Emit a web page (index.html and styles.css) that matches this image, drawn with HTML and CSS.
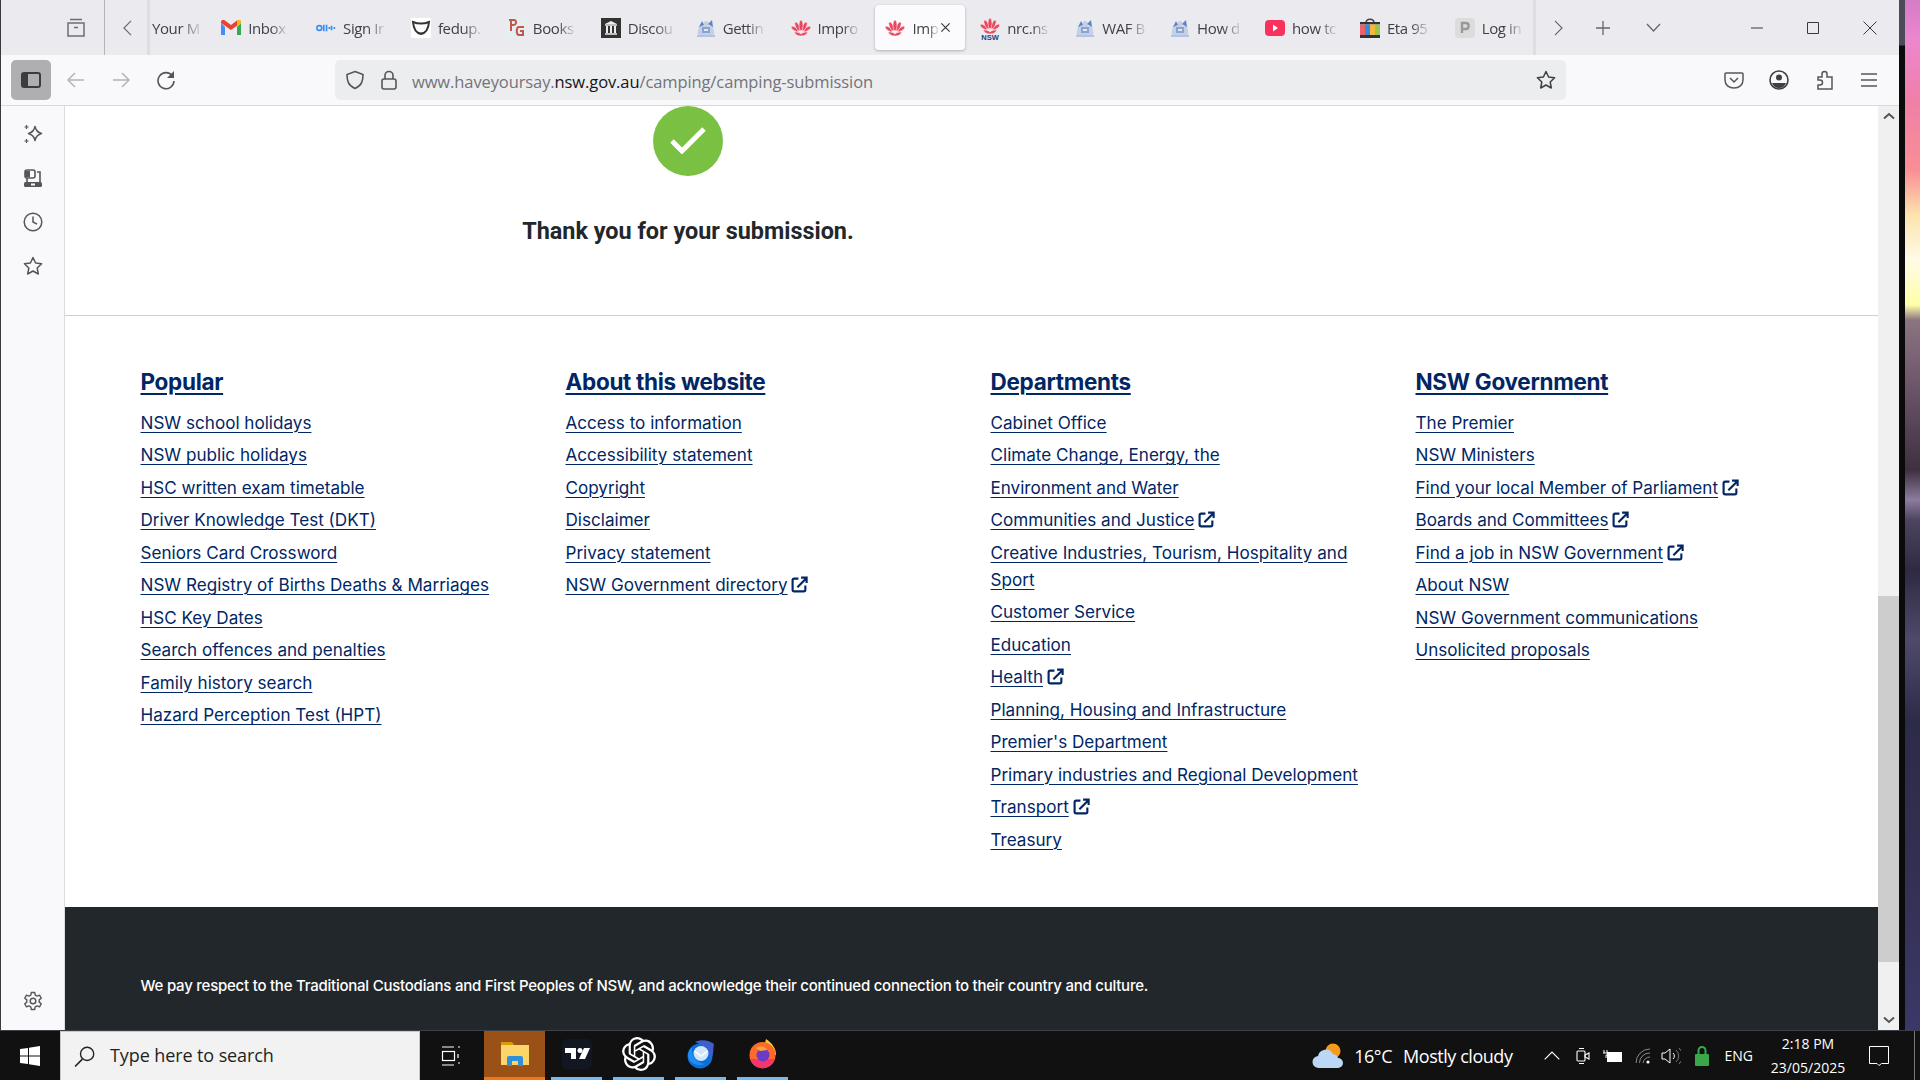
FILE: index.html
```html
<!DOCTYPE html>
<html lang="en">
<head>
<meta charset="utf-8">
<title>Thank you for your submission</title>
<link rel="stylesheet" href="styles.css">
</head>
<body>
<svg class="sprite" aria-hidden="true">
  <symbol id="gmail" viewBox="0 0 20 16"><path d="M0 3v12h4V7z" fill="#4a8af4"/><path d="M16 7v8h4V3z" fill="#34a853"/><path d="M0 3l10 7 10-7V2c0-2-2.500-2.500-4-1.500L10 5 4 .5C2.500-.5 0 0 0 2z" fill="#ea4335"/><path d="M16 .5V7l4-4V2c0-2-2.500-2.500-4-1.500z" fill="#fbbc04"/></symbol>
  <symbol id="okta" viewBox="0 0 18 8"><circle cx="3" cy="4" r="2.200" fill="none" stroke="#3a8df5" stroke-width="1.500"/><path d="M7 1v6M9.500 1v6M12 3v2M14 2v4M16.500 3v2" stroke="#3a8df5" stroke-width="1.500"/></symbol>
  <symbol id="fedup" viewBox="0 0 20 20"><rect width="20" height="20" fill="#fff"/><path d="M2 4c5 2 11 2 16 0-.5 6-2 11-8 12C4 15 2.500 10 2 4z" fill="none" stroke="#333" stroke-width="2"/><path d="M6 13c3 2 5 2 8 0l-1 3H7z" fill="#333"/></symbol>
  <symbol id="pg" viewBox="0 0 20 20"><rect width="20" height="20" fill="#e6eef0"/><path d="M3 2h5c3 0 3 5-1 5H5M5 2v11" fill="none" stroke="#c2574c" stroke-width="2"/><path d="M18 9h-5c-3 0-3 8 0 8h4v-4h-3" fill="none" stroke="#c2574c" stroke-width="2"/></symbol>
  <symbol id="disc" viewBox="0 0 20 20"><rect width="20" height="20" fill="#333"/><path d="M4 6l6-3 6 3z" fill="#eee"/><path d="M4 7h12M4 16h12" stroke="#eee" stroke-width="1.500"/><path d="M6 8v7M10 8v7M14 8v7" stroke="#eee" stroke-width="2"/></symbol>
  <symbol id="arms" viewBox="0 0 20 20"><path d="M10 3C8 3 7 5 7 8H3C3 10 1 14 2 17l3 1h10l3-1c1-3-1-7-1-9h-4c0-3-1-5-3-5z" fill="#c3d0e6"/><path d="M3 9l3-6 2 4zM12 6l4-4 1 7z" fill="#5d84c4"/><path d="M6 9h8v6H6z" fill="#8aa4d2"/><path d="M8 11h4v2H8z" fill="#dfe7f4"/><path d="M1 17h18v2H1z" fill="#b2c4e2"/></symbol>
  <symbol id="waratah" viewBox="0 0 20 20"><g fill="#e8475f" stroke="#fff" stroke-width=".5"><ellipse cx="3.800" cy="11" rx="1.700" ry="4.200" transform="rotate(-55 3.800 11)"/><ellipse cx="16.200" cy="11" rx="1.700" ry="4.200" transform="rotate(55 16.200 11)"/><ellipse cx="6.500" cy="8.500" rx="1.900" ry="4.800" transform="rotate(-24 6.500 8.500)"/><ellipse cx="13.500" cy="8.500" rx="1.900" ry="4.800" transform="rotate(24 13.500 8.500)"/><ellipse cx="10" cy="7.500" rx="2" ry="5.200"/><path d="M3 14c2 0 5 0 7 2 2-2 5-2 7-2-1 2-3 4-7 4s-6-2-7-4z"/></g></symbol>
  <symbol id="nsw" viewBox="0 0 20 24"><use href="#waratah" width="20" height="20"/><text x="10" y="23.500" font-size="7.500" font-weight="700" fill="#1d3f7a" text-anchor="middle" font-family="Liberation Sans, sans-serif">NSW</text></symbol>
  <symbol id="yt" viewBox="0 0 20 16"><rect width="20" height="16" rx="4" fill="#f9315c"/><path d="M8 4.500l5 3.500-5 3.500z" fill="#fff"/></symbol>
  <symbol id="eta" viewBox="0 0 20 20"><path d="M6 5c0-5 8-5 8 0" fill="none" stroke="#444" stroke-width="1.500"/><rect y="4" width="20" height="2.500" fill="#333"/><rect y="17" width="20" height="3" fill="#333"/><rect y="6.500" width="5" height="10.500" fill="#e8636b"/><rect x="5" y="6.500" width="5" height="10.500" fill="#3c88d8"/><rect x="10" y="6.500" width="5" height="10.500" fill="#f3b93c"/><rect x="15" y="6.500" width="5" height="10.500" fill="#9cc649"/></symbol>
  <symbol id="pbox" viewBox="0 0 20 20"><rect width="20" height="20" rx="4" fill="#dcdcdc"/><path d="M7 15V5h4c3.500 0 3.500 6 0 6H7" fill="none" stroke="#999" stroke-width="2.400"/></symbol>
  <symbol id="ext" viewBox="0 0 16 16"><path d="M7 2.500H3A1.500 1.500 0 0 0 1.500 4v9A1.500 1.500 0 0 0 3 14.500h9a1.500 1.500 0 0 0 1.500-1.500V9" fill="none" stroke="#002664" stroke-width="2"/><path d="M6 10.500L14 2.500M9.500 1.500h5.200v5.200" fill="none" stroke="#002664" stroke-width="2"/></symbol>
</svg>

<div class="desk">
  <div class="upper">
    <div class="window">
      <header class="tabbar">
        <svg class="ti tgroup" viewBox="0 0 20 20"><path d="M4 1.500h12M2 5h16v13H2zM8 9.500h4" fill="none" stroke="#6d6d73" stroke-width="1.500"/></svg>
        <div class="vsep"></div>
        <svg class="ti chev-left" viewBox="0 0 10 18"><path d="M9 1L1 9l8 8" fill="none" stroke="#66666c" stroke-width="1.300"/></svg>
        <div class="tabs">
          <div class="tab tab-first"><span class="tab-label">Your M</span></div>
          <div class="tab"><svg class="fav"><use href="#gmail"/></svg><span class="tab-label">Inbox</span></div>
          <div class="tab"><svg class="fav"><use href="#okta"/></svg><span class="tab-label">Sign Ir</span></div>
          <div class="tab"><svg class="fav"><use href="#fedup"/></svg><span class="tab-label">fedup.</span></div>
          <div class="tab"><svg class="fav"><use href="#pg"/></svg><span class="tab-label">Books</span></div>
          <div class="tab"><svg class="fav"><use href="#disc"/></svg><span class="tab-label">Discou</span></div>
          <div class="tab"><svg class="fav"><use href="#arms"/></svg><span class="tab-label">Gettin</span></div>
          <div class="tab"><svg class="fav"><use href="#waratah"/></svg><span class="tab-label">Impro</span></div>
          <div class="tab tab-active"><svg class="fav"><use href="#waratah"/></svg><span class="tab-label">Imp</span><svg class="tab-close" viewBox="0 0 12 12"><path d="M1.500 1.500l9 9M10.500 1.500l-9 9" stroke="#3a3a40" stroke-width="1.300"/></svg></div>
          <div class="tab"><svg class="fav fav-tall"><use href="#nsw"/></svg><span class="tab-label">nrc.ns</span></div>
          <div class="tab"><svg class="fav"><use href="#arms"/></svg><span class="tab-label">WAF B</span></div>
          <div class="tab"><svg class="fav"><use href="#arms"/></svg><span class="tab-label">How d</span></div>
          <div class="tab"><svg class="fav"><use href="#yt"/></svg><span class="tab-label">how tc</span></div>
          <div class="tab"><svg class="fav"><use href="#eta"/></svg><span class="tab-label">Eta 95</span></div>
          <div class="tab"><svg class="fav"><use href="#pbox"/></svg><span class="tab-label">Log in</span></div>
        </div>
        <svg class="ti chev-right" viewBox="0 0 10 18"><path d="M1 1l8 8-8 8" fill="none" stroke="#66666c" stroke-width="1.300"/></svg>
        <svg class="ti plus" viewBox="0 0 14 14"><path d="M7 0v14M0 7h14" stroke="#66666c" stroke-width="1.300"/></svg>
        <svg class="ti down" viewBox="0 0 15 9"><path d="M1 1l6.500 7L14 1" fill="none" stroke="#66666c" stroke-width="1.300"/></svg>
        <svg class="ti win-min" viewBox="0 0 12 12"><path d="M0 6h12" stroke="#3a3a40"/></svg>
        <svg class="ti win-max" viewBox="0 0 12 12"><path d="M.5.5h11v11H.5z" fill="none" stroke="#3a3a40"/></svg>
        <svg class="ti win-close" viewBox="0 0 14 14"><path d="M.5.500l13 13M13.500.500l-13 13" stroke="#3a3a40"/></svg>
      </header>

      <nav class="toolbar">
        <div class="side-btn"><svg class="ic20" viewBox="0 0 20 20"><rect x="1" y="3" width="18" height="14" rx="2" fill="none" stroke="#3b3b44" stroke-width="2"/><rect x="1" y="3" width="6" height="14" fill="#3b3b44"/></svg></div>
        <svg class="ic20 back" viewBox="0 0 20 20"><path d="M18 10H2M9 3l-7 7 7 7" fill="none" stroke="#b4b4b8" stroke-width="1.500"/></svg>
        <svg class="ic20 fwd" viewBox="0 0 20 20"><path d="M2 10h16M11 3l7 7-7 7" fill="none" stroke="#b4b4b8" stroke-width="1.500"/></svg>
        <svg class="ic20 reload" viewBox="0 0 20 20"><path d="M16.500 6A8 8 0 1 0 18 11" fill="none" stroke="#55555c" stroke-width="1.600"/><path d="M18 1v7h-7z" fill="#55555c"/></svg>
        <div class="urlbar">
          <svg class="ic20 shield" viewBox="0 0 20 20"><path d="M10 1.500l8 3c0 6-1 11-8 14-7-3-8-8-8-14z" fill="none" stroke="#55555c" stroke-width="1.600"/></svg>
          <svg class="ic20 lock" viewBox="0 0 20 20"><rect x="3" y="9" width="14" height="10" rx="2" fill="none" stroke="#55555c" stroke-width="1.600"/><path d="M6 9V5.500a4 4 0 0 1 8 0V9" fill="none" stroke="#55555c" stroke-width="1.600"/></svg>
          <span class="url"><span class="url-dim">www.haveyoursay.</span>nsw.gov.au<span class="url-dim">/camping/camping-submission</span></span>
          <svg class="ic20 ustar" viewBox="0 0 20 20"><path d="M10 1.500l2.600 5.500 6 .8-4.400 4.200 1.100 6L10 15l-5.300 3 1.100-6L1.400 7.800l6-.8z" fill="none" stroke="#3f3f46" stroke-width="1.500" stroke-linejoin="round"/></svg>
        </div>
        <svg class="ic20 pocket" viewBox="0 0 20 20"><path d="M2 3h16a1 1 0 0 1 1 1v6c0 5-4 8-9 8s-9-3-9-8V4a1 1 0 0 1 1-1z" fill="none" stroke="#55555c" stroke-width="1.500"/><path d="M6 8l4 4 4-4" fill="none" stroke="#55555c" stroke-width="1.500"/></svg>
        <svg class="ic20 profile" viewBox="0 0 20 20"><circle cx="10" cy="10" r="9" fill="none" stroke="#3f3f46" stroke-width="1.600"/><circle cx="10" cy="7.500" r="3" fill="#3f3f46"/><path d="M3 13h14c-1 3-4 5-7 5s-6-2-7-5z" fill="#3f3f46"/></svg>
        <svg class="ic20 puzzle" viewBox="0 0 20 20"><path d="M3 7h4V4a2.500 2.500 0 0 1 5 0v3h5v12H3v-4h2a2.500 2.500 0 0 0 0-5H3z" fill="none" stroke="#55555c" stroke-width="1.500"/></svg>
        <svg class="ic20 menu" viewBox="0 0 20 20"><path d="M2 4h16M2 10h16M2 16h16" stroke="#55555c" stroke-width="1.500"/></svg>
      </nav>

      <div class="body">
        <aside class="sidebar">
          <svg class="ic20" viewBox="0 0 20 20"><path d="M12 2.500c.8 4 2.500 5.800 6.500 7-4 1.200-5.700 3-6.500 7-.8-4-2.500-5.800-6.500-7 4-1.200 5.700-3 6.500-7z" fill="none" stroke="#55555c" stroke-width="1.500" stroke-linejoin="round"/><path d="M3.500 1v4M1.500 3h4M3.500 15v4M1.500 17h4" stroke="#55555c" stroke-width="1.200"/></svg>
          <svg class="ic20" viewBox="0 0 20 20"><rect x="2" y="2" width="10" height="8" rx="2" fill="none" stroke="#55555c" stroke-width="1.600"/><rect x="2" y="3" width="5" height="6" fill="#55555c"/><path d="M14 4h3v10M4 10v4" fill="none" stroke="#55555c" stroke-width="1.600"/><rect x="1" y="14" width="18" height="5" rx="1.500" fill="#55555c"/><rect x="8" y="15.500" width="4" height="2" fill="#f9f9fb"/></svg>
          <svg class="ic20" viewBox="0 0 20 20"><circle cx="10" cy="10" r="8.800" fill="none" stroke="#55555c" stroke-width="1.500"/><path d="M10 4.500V10l4 2.200" fill="none" stroke="#55555c" stroke-width="1.500"/></svg>
          <svg class="ic20" viewBox="0 0 20 20"><path d="M10 1.500l2.600 5.500 6 .8-4.400 4.200 1.100 6L10 15l-5.300 3 1.100-6L1.400 7.800l6-.8z" fill="none" stroke="#55555c" stroke-width="1.500" stroke-linejoin="round"/></svg>
          <svg class="ic20 gear" viewBox="0 0 20 20"><circle cx="10" cy="10" r="2.800" fill="none" stroke="#55555c" stroke-width="1.500"/><path d="M8.300 1.500h3.400l.5 2.600 1.900 1 2.400-.9 1.700 3-2 1.700v2.200l2 1.700-1.700 3-2.400-.9-1.900 1-.5 2.600H8.300l-.5-2.600-1.900-1-2.400.9-1.700-3 2-1.700V8.900l-2-1.700 1.700-3 2.400.9 1.900-1z" fill="none" stroke="#55555c" stroke-width="1.400" stroke-linejoin="round"/></svg>
        </aside>

        <main class="content">
          <section class="thanks">
            <div class="thanks-inner">
              <div class="check"><svg class="check-mark" viewBox="0 0 36 28"><path d="M2 15l10 10L34 3" fill="none" stroke="#fff" stroke-width="5"/></svg></div>
              <h1 class="thanks-title">Thank you for your submission.</h1>
            </div>
          </section>

          <section class="links">
            <div class="link-col">
              <h2 class="col-title"><a href="#">Popular</a></h2>
              <ul class="link-list">
                <li><a href="#">NSW school holidays</a></li>
                <li><a href="#">NSW public holidays</a></li>
                <li><a href="#">HSC written exam timetable</a></li>
                <li><a href="#">Driver Knowledge Test (DKT)</a></li>
                <li><a href="#">Seniors Card Crossword</a></li>
                <li><a href="#">NSW Registry of Births Deaths &amp; Marriages</a></li>
                <li><a href="#">HSC Key Dates</a></li>
                <li><a href="#">Search offences and penalties</a></li>
                <li><a href="#">Family history search</a></li>
                <li><a href="#">Hazard Perception Test (HPT)</a></li>
              </ul>
            </div>
            <div class="link-col">
              <h2 class="col-title"><a href="#">About this website</a></h2>
              <ul class="link-list">
                <li><a href="#">Access to information</a></li>
                <li><a href="#">Accessibility statement</a></li>
                <li><a href="#">Copyright</a></li>
                <li><a href="#">Disclaimer</a></li>
                <li><a href="#">Privacy statement</a></li>
                <li><a href="#">NSW Government directory</a> <svg class="ext"><use href="#ext"/></svg></li>
              </ul>
            </div>
            <div class="link-col">
              <h2 class="col-title"><a href="#">Departments</a></h2>
              <ul class="link-list">
                <li><a href="#">Cabinet Office</a></li>
                <li><a href="#">Climate Change, Energy, the</a></li>
                <li><a href="#">Environment and Water</a></li>
                <li><a href="#">Communities and Justice</a> <svg class="ext"><use href="#ext"/></svg></li>
                <li><a href="#">Creative Industries, Tourism, Hospitality and Sport</a></li>
                <li><a href="#">Customer Service</a></li>
                <li><a href="#">Education</a></li>
                <li><a href="#">Health</a> <svg class="ext"><use href="#ext"/></svg></li>
                <li><a href="#">Planning, Housing and Infrastructure</a></li>
                <li><a href="#">Premier's Department</a></li>
                <li><a href="#">Primary industries and Regional Development</a></li>
                <li><a href="#">Transport</a> <svg class="ext"><use href="#ext"/></svg></li>
                <li><a href="#">Treasury</a></li>
              </ul>
            </div>
            <div class="link-col">
              <h2 class="col-title"><a href="#">NSW Government</a></h2>
              <ul class="link-list">
                <li><a href="#">The Premier</a></li>
                <li><a href="#">NSW Ministers</a></li>
                <li><a href="#">Find your local Member of Parliament</a> <svg class="ext"><use href="#ext"/></svg></li>
                <li><a href="#">Boards and Committees</a> <svg class="ext"><use href="#ext"/></svg></li>
                <li><a href="#">Find a job in NSW Government</a> <svg class="ext"><use href="#ext"/></svg></li>
                <li><a href="#">About NSW</a></li>
                <li><a href="#">NSW Government communications</a></li>
                <li><a href="#">Unsolicited proposals</a></li>
              </ul>
            </div>
          </section>

          <footer class="site-footer">
            <p class="ack">We pay respect to the Traditional Custodians and First Peoples of NSW, and acknowledge their continued connection to their country and culture.</p>
          </footer>
        </main>

        <div class="scrollbar">
          <svg class="sb-arrow" viewBox="0 0 12 8"><path d="M1 6.500l5-4.500 5 4.500" fill="none" stroke="#555" stroke-width="2"/></svg>
          <div class="sb-track"><div class="sb-thumb"></div></div>
          <svg class="sb-arrow" viewBox="0 0 12 8"><path d="M1 1.500L6 6l5-4.500" fill="none" stroke="#555" stroke-width="2"/></svg>
        </div>
      </div>
    </div>
    <div class="edge"></div>
    <div class="wallpaper"></div>
  </div>

  <footer class="taskbar">
    <svg class="start" viewBox="0 0 20 20"><path d="M0 3l8-1.100V9.500H0zM9 1.700L20 0v9.500H9zM0 10.500h8v7.600L0 17zM9 10.500h11V20L9 18.300z" fill="#fff"/></svg>
    <div class="search">
      <svg class="search-ic" viewBox="0 0 20 20"><circle cx="12.500" cy="7.500" r="6.300" fill="none" stroke="#222" stroke-width="1.300"/><path d="M8 12.500L1 19.500" stroke="#222" stroke-width="1.500"/></svg>
      <span class="search-text">Type here to search</span>
    </div>
    <svg class="taskview" viewBox="0 0 20 20"><path d="M1 1h12M1 19h12M17 1h2M17 8v4M17 17h2" stroke="#fff" stroke-width="1.200" fill="none"/><rect x="1.500" y="5.500" width="12" height="9" fill="none" stroke="#fff" stroke-width="1.200"/></svg>
    <div class="task task-active">
      <svg class="task-ic" viewBox="0 0 30 30"><path d="M1 3h11l3 4H1z" fill="#d99a0b"/><path d="M1 6h28v20H1z" fill="#fbd568"/><path d="M7 27v-8a2 2 0 0 1 2-2h12a2 2 0 0 1 2 2v8h-5v-5h-6v5z" fill="#2f8fd8"/></svg>
    </div>
    <div class="task task-tv">
      <svg class="task-ic" viewBox="0 0 30 30"><rect width="30" height="30" rx="5" fill="#131722"/><path d="M3 9h11v11H9v-6H3z" fill="#fff"/><circle cx="18" cy="11.500" r="2.500" fill="#fff"/><path d="M22 9h6l-5 11h-6z" fill="#fff"/></svg>
    </div>
    <div class="task task-open">
      <svg class="task-ic task-knot" viewBox="0 0 24 24"><path d="M22.282 9.821a5.985 5.985 0 0 0-.516-4.911 6.046 6.046 0 0 0-6.510-2.900A6.065 6.065 0 0 0 4.981 4.182a5.985 5.985 0 0 0-3.998 2.900 6.046 6.046 0 0 0 .743 7.097 5.980 5.980 0 0 0 .511 4.911 6.051 6.051 0 0 0 6.515 2.900A5.985 5.985 0 0 0 13.260 24a6.056 6.056 0 0 0 5.772-4.206 5.989 5.989 0 0 0 3.998-2.900 6.056 6.056 0 0 0-.748-7.073zm-9.022 12.608a4.476 4.476 0 0 1-2.876-1.041l.142-.080 4.778-2.758a.795.795 0 0 0 .393-.682v-6.737l2.020 1.169a.071.071 0 0 1 .038.052v5.583a4.504 4.504 0 0 1-4.495 4.494zm-9.661-4.125a4.471 4.471 0 0 1-.535-3.014l.142.085 4.783 2.758a.771.771 0 0 0 .781 0l5.843-3.369v2.333a.080.080 0 0 1-.033.061L9.740 19.950a4.499 4.499 0 0 1-6.141-1.646zM2.341 7.896a4.485 4.485 0 0 1 2.365-1.973V11.600a.766.766 0 0 0 .388.677l5.815 3.354-2.020 1.169a.076.076 0 0 1-.071 0l-4.830-2.787A4.504 4.504 0 0 1 2.341 7.872zm16.596 3.856L13.104 8.364 15.119 7.200a.076.076 0 0 1 .071 0l4.830 2.791a4.494 4.494 0 0 1-.676 8.104v-5.677a.790.790 0 0 0-.407-.667zm2.011-3.023l-.142-.085-4.774-2.782a.776.776 0 0 0-.785 0L9.409 9.230V6.897a.066.066 0 0 1 .028-.061l4.830-2.787a4.499 4.499 0 0 1 6.680 4.660zM8.306 12.863l-2.020-1.164a.080.080 0 0 1-.038-.057V6.074a4.499 4.499 0 0 1 7.376-3.454l-.142.081L8.704 5.459a.795.795 0 0 0-.393.681zm1.098-2.365l2.602-1.500 2.607 1.500v3l-2.597 1.500-2.607-1.500z" fill="#fff"/></svg>
    </div>
    <div class="task task-open">
      <svg class="task-ic" viewBox="0 0 30 30"><circle cx="14" cy="17" r="12.500" fill="#0b6fd8"/><path d="M9 3c6-3 14-2 19 2-1 5 0 10-3 15-1-7-6-13-16-17z" fill="#3d5fd0"/><path d="M6 8c-1 8 3 16 13 17-6 3-16 0-17-8 0-4 2-7 4-9z" fill="#1e8ef5"/><circle cx="15" cy="14.500" r="7.500" fill="#cfe6fb"/><path d="M8.500 12l6.500 5 6.500-5" fill="none" stroke="#fff" stroke-width="1.500"/></svg>
    </div>
    <div class="task task-open">
      <svg class="task-ic" viewBox="0 0 30 30"><path d="M18 0c6 4 10 9 10 16H14z" fill="#ffc936"/><circle cx="14.500" cy="16" r="13" fill="#ff6a2b"/><path d="M2 20a13 13 0 0 0 25 0z" fill="#f5366b"/><circle cx="15" cy="16" r="6.500" fill="#6b3bc8"/><path d="M8 9c4-3 9-2 11 2l-7 1z" fill="#ffa436"/></svg>
    </div>

    <div class="tray">
      <svg class="weather" viewBox="0 0 32 26"><circle cx="21" cy="8" r="7.500" fill="#f59a1c"/><path d="M7 25a6 6 0 0 1-1-12 8 8 0 0 1 15-2 6 6 0 0 1 5 4 5 5 0 0 1 0 10z" fill="#bcd6f5"/></svg>
      <span class="temp">16°C</span>
      <span class="cond">Mostly cloudy</span>
      <svg class="t-chev" viewBox="0 0 16 9"><path d="M.7 8.300L8 1l7.300 7.300" fill="none" stroke="#fff" stroke-width="1.200"/></svg>
      <svg class="t-meet" viewBox="0 0 14 20"><rect x="1" y="5" width="8" height="10" rx="1" fill="none" stroke="#fff" stroke-width="1.100"/><path d="M9 9l4-2v6l-4-2zM3 2.500h5M3 17.500h5" fill="none" stroke="#fff" stroke-width="1.100"/></svg>
      <svg class="t-batt" viewBox="0 0 20 14"><rect x="4" y="3" width="15" height="10" fill="#fff"/><path d="M1 1v3M4 1v3M0 4h5v2H3v3" stroke="#fff" fill="none"/></svg>
      <svg class="t-wifi" viewBox="0 0 16 16"><path d="M1 15A14 14 0 0 1 15 1M4.500 15A10 10 0 0 1 15 5M8 15a7 7 0 0 1 7-6" fill="none" stroke="#8a8a8a"/><circle cx="13" cy="14" r="1.600" fill="#fff"/></svg>
      <svg class="t-vol" viewBox="0 0 20 18"><path d="M1 6h3l5-4v14l-5-4H1z" fill="none" stroke="#fff"/><path d="M12 6a4 4 0 0 1 0 6" fill="none" stroke="#fff"/><path d="M15 3a8 8 0 0 1 0 12M18 1a11 11 0 0 1 0 16" fill="none" stroke="#777"/></svg>
      <svg class="t-lock" viewBox="0 0 14 20"><rect y="8" width="14" height="12" rx="1" fill="#3aa84a"/><path d="M3.500 8V4.500a3.500 3.500 0 0 1 7 0V8" fill="none" stroke="#3aa84a" stroke-width="2"/></svg>
      <span class="lang">ENG</span>
      <div class="clock"><span>2:18 PM</span><span>23/05/2025</span></div>
      <svg class="notif" viewBox="0 0 20 20"><path d="M.5.500h19v17h-7L10 19.500 8 17.500H.5z" fill="none" stroke="#fff"/></svg>
      <div class="show-desk"></div>
    </div>
  </footer>
</div>
</body>
</html>
```

FILE: styles.css
```css
* { box-sizing: border-box; }
html, body { margin: 0; padding: 0; height: 100%; overflow: hidden; }
body { font-family: "Inter", "Liberation Sans", sans-serif; background: #111; }
.sprite { display: none; }
h1, h2, p, ul { margin: 0; padding: 0; }
ul { list-style: none; }
svg { display: block; flex: none; }

.desk { display: flex; flex-direction: column; width: 1920px; height: 1080px; }
.upper { display: flex; height: 1030px; }
.window { display: flex; flex-direction: column; width: 1899px; border-left: 1px solid #3a3a3a; }
.edge { width: 6px; background: linear-gradient(#4a4a58 0, #4a4a58 45px, #0a0a0a 46px, #0a0a0a 100%); }
.wallpaper {
  flex: 1;
  background: linear-gradient(#d57cc8 0, #ec86cf 40px, #f07fa8 100px, #f98e94 170px, #fde3ae 215px, #fffbe6 260px, #feffa8 305px, #8c7480 320px, #6a5468 390px, #3e3040 470px, #8c7c9e 500px, #4d4460 520px, #2f2a42 570px, #4f4a6c 640px, #2c2b48 720px, #332f52 860px, #3a3868 1030px);
}

/* tab bar */
.tabbar { display: flex; align-items: center; height: 55px; background: #eaeaef; color: #3a3a40; flex: none; }
.ti { display: block; }
.tgroup { width: 20px; height: 20px; margin-left: 65px; }
.vsep { width: 1px; height: 55px; background: #b5b5b8; margin-left: 18px; }
.chev-left { width: 9px; height: 16px; margin-left: 18px; }
.tabs { display: flex; align-items: center; gap: 4.900px; width: 1389px; height: 55px; margin-left: 15px; overflow: hidden; border-left: 3px solid #dedee2; border-right: 3px solid #dedee2; }
.tab { display: flex; align-items: center; flex: none; width: 90px; height: 45px; padding-left: 10px; border-radius: 4px; overflow: hidden; position: relative; }
.tab-first { width: 56.300px; padding-left: 2px; }
.tab-active { background: #fbfbfd; box-shadow: 0 1px 3px rgba(0,0,0,.25); }
.fav { width: 20px; height: 20px; margin-right: 7px; }
.fav-tall { height: 24px; }
.tab-label { display: block; font: 15px/20px "Open Sans", "Noto Sans", sans-serif; letter-spacing: -.4px; white-space: nowrap; color: #3f3f46; -webkit-mask-image: linear-gradient(90deg, #000 60%, rgba(0,0,0,.15) 100%); mask-image: linear-gradient(90deg, #000 60%, rgba(0,0,0,.15) 100%); }
.tab-active .tab-label { margin-right: 0; }
.tab-close { width: 11px; height: 11px; margin-left: 2px; }
.chev-right { width: 9px; height: 16px; margin-left: 18px; }
.plus { width: 14px; height: 14px; margin-left: 33px; }
.down { width: 15px; height: 9px; margin-left: 36px; }
.win-min { width: 12px; height: 12px; margin-left: 90px; }
.win-max { width: 12px; height: 12px; margin-left: 44px; }
.win-close { width: 14px; height: 14px; margin-left: 44px; }

/* toolbar */
.toolbar { display: flex; align-items: center; height: 51px; padding-bottom: 1px; background: #f9f9fb; border-bottom: 1px solid #d9d9dc; flex: none; }
.ic20 { width: 20px; height: 20px; }
.side-btn { display: flex; align-items: center; justify-content: center; width: 40px; height: 40px; margin-left: 10px; border-radius: 5px; background: #afafb1; }
.back { margin-left: 15px; }
.fwd { margin-left: 25px; }
.reload { margin-left: 25px; }
.urlbar { display: flex; align-items: center; width: 1231px; height: 40px; margin-left: 159px; padding-left: 10px; border-radius: 5px; background: #ecedef; }
.lock { margin-left: 14px; }
.url { margin-left: 13px; padding-top: 4px; font: 16.500px/20px "Open Sans", "Noto Sans", sans-serif; letter-spacing: -.1px; color: #15141a; }
.url-dim { color: #73737a; }
.ustar { margin-left: auto; margin-right: 10px; }
.pocket { margin-left: 158px; }
.profile { margin-left: 25px; }
.puzzle { margin-left: 26px; }
.menu { margin-left: 24px; }

/* page body */
.body { display: flex; flex: 1; min-height: 0; }
.sidebar { display: flex; flex-direction: column; align-items: center; gap: 24px; width: 64px; padding: 18px 0 0; background: #f9f9fb; border-right: 1px solid #dcdcdf; flex: none; }
.gear { margin-top: auto; margin-bottom: 19px; }
.content { display: flex; flex-direction: column; width: 1813px; background: #fff; overflow: hidden; flex: none; }

.thanks { height: 210px; border-bottom: 1px solid #d0d0d0; flex: none; }
.thanks-inner { display: flex; flex-direction: column; align-items: center; width: 1246px; }
.check { display: flex; align-items: center; justify-content: center; width: 70px; height: 70px; border-radius: 50%; background: #7ac143; }
.check-mark { width: 36px; height: 28px; margin-top: -2px; }
.thanks-title { margin-top: 40px; font: 700 23.400px/30px "Roboto", "Liberation Sans", sans-serif; color: #22272b; }

.links { display: grid; grid-template-columns: repeat(4, 385px); column-gap: 40px; height: 591px; padding: 48px 0 0 75.500px; flex: none; }
.col-title { font-size: 22.500px; line-height: 36px; font-weight: 700; letter-spacing: -.3px; }
.col-title a { color: #002664; text-decoration: underline; text-decoration-thickness: 2px; text-underline-offset: 3px; }
.link-list { display: flex; flex-direction: column; gap: 5.500px; margin-top: 8.500px; }
.link-list li { display: block; font-size: 17.100px; line-height: 27px; }
.link-list a { color: #002664; text-decoration: underline; text-decoration-thickness: 1px; text-underline-offset: 3px; }
.ext { display: inline-block; width: 17px; height: 17px; margin-left: -1px; vertical-align: -2px; }

.site-footer { flex: 1; background: #22272b; padding: 69px 0 0 75.500px; }
.ack { font-size: 15px; line-height: 20px; font-weight: 500; letter-spacing: -.235px; color: #fff; }

/* scrollbar */
.scrollbar { display: flex; flex-direction: column; align-items: center; width: 21px; background: #f0f0f0; flex: none; }
.sb-arrow { width: 12px; height: 8px; margin: 6px 0; }
.sb-track { flex: 1; width: 100%; position: relative; }
.sb-thumb { position: absolute; left: 0; right: 0; top: 470px; height: 366px; background: #cdcdcd; }

/* task bar */
.taskbar { display: flex; align-items: center; height: 50px; background: #111; color: #fff; border-top: 1px solid #3c4048; flex: none; }
.start { width: 20px; height: 20px; margin-left: 20px; }
.search { display: flex; align-items: center; width: 360px; height: 49px; margin-left: 20px; padding-left: 13px; background: #f2f2f2; border: 1px solid #c8c8c8; border-width: 1px 1px 0; }
.search-ic { width: 21px; height: 21px; }
.search-text { margin-left: 15px; margin-top: -2px; font: 18px/24px "Open Sans", "Noto Sans", sans-serif; letter-spacing: -.1px; color: #1f1f1f; }
.taskview { width: 20px; height: 20px; margin-left: 21px; }
.task { display: flex; align-items: center; justify-content: center; width: 51px; height: 49px; margin-left: 11px; border-bottom: 3px solid transparent; }
.task-active { width: 61px; margin-left: 23px; background: #9a5118; border-bottom-color: #f7750f; }
.task-tv { margin-left: 6px; border-bottom-color: #76b9ed; }
.task-open { border-bottom-color: #76b9ed; }
.task-ic { width: 30px; height: 30px; }
.task-knot { width: 34px; height: 34px; }

.tray { display: flex; align-items: center; margin-left: auto; height: 49px; font-family: "Open Sans", "Noto Sans", sans-serif; }
.weather { width: 32px; height: 26px; }
.temp { margin-left: 10px; font-size: 18px; letter-spacing: -.45px; }
.cond { margin-left: 11px; font-size: 18px; letter-spacing: -.45px; }
.t-chev { width: 16px; height: 9px; margin-left: 31px; }
.t-meet { width: 14px; height: 20px; margin-left: 16px; }
.t-batt { width: 20px; height: 14px; margin-left: 13px; }
.t-wifi { width: 16px; height: 16px; margin-left: 12px; }
.t-vol { width: 20px; height: 18px; margin-left: 10px; }
.t-lock { width: 14px; height: 20px; margin-left: 14px; }
.lang { margin-left: 16px; font-size: 14px; }
.clock { display: flex; flex-direction: column; align-items: center; width: 80px; margin-left: 15px; font-size: 14px; line-height: 24px; }
.notif { width: 20px; height: 20px; margin-left: 21px; }
.show-desk { width: 1px; height: 49px; margin-left: 25px; margin-right: 5px; background: #777; }
```
